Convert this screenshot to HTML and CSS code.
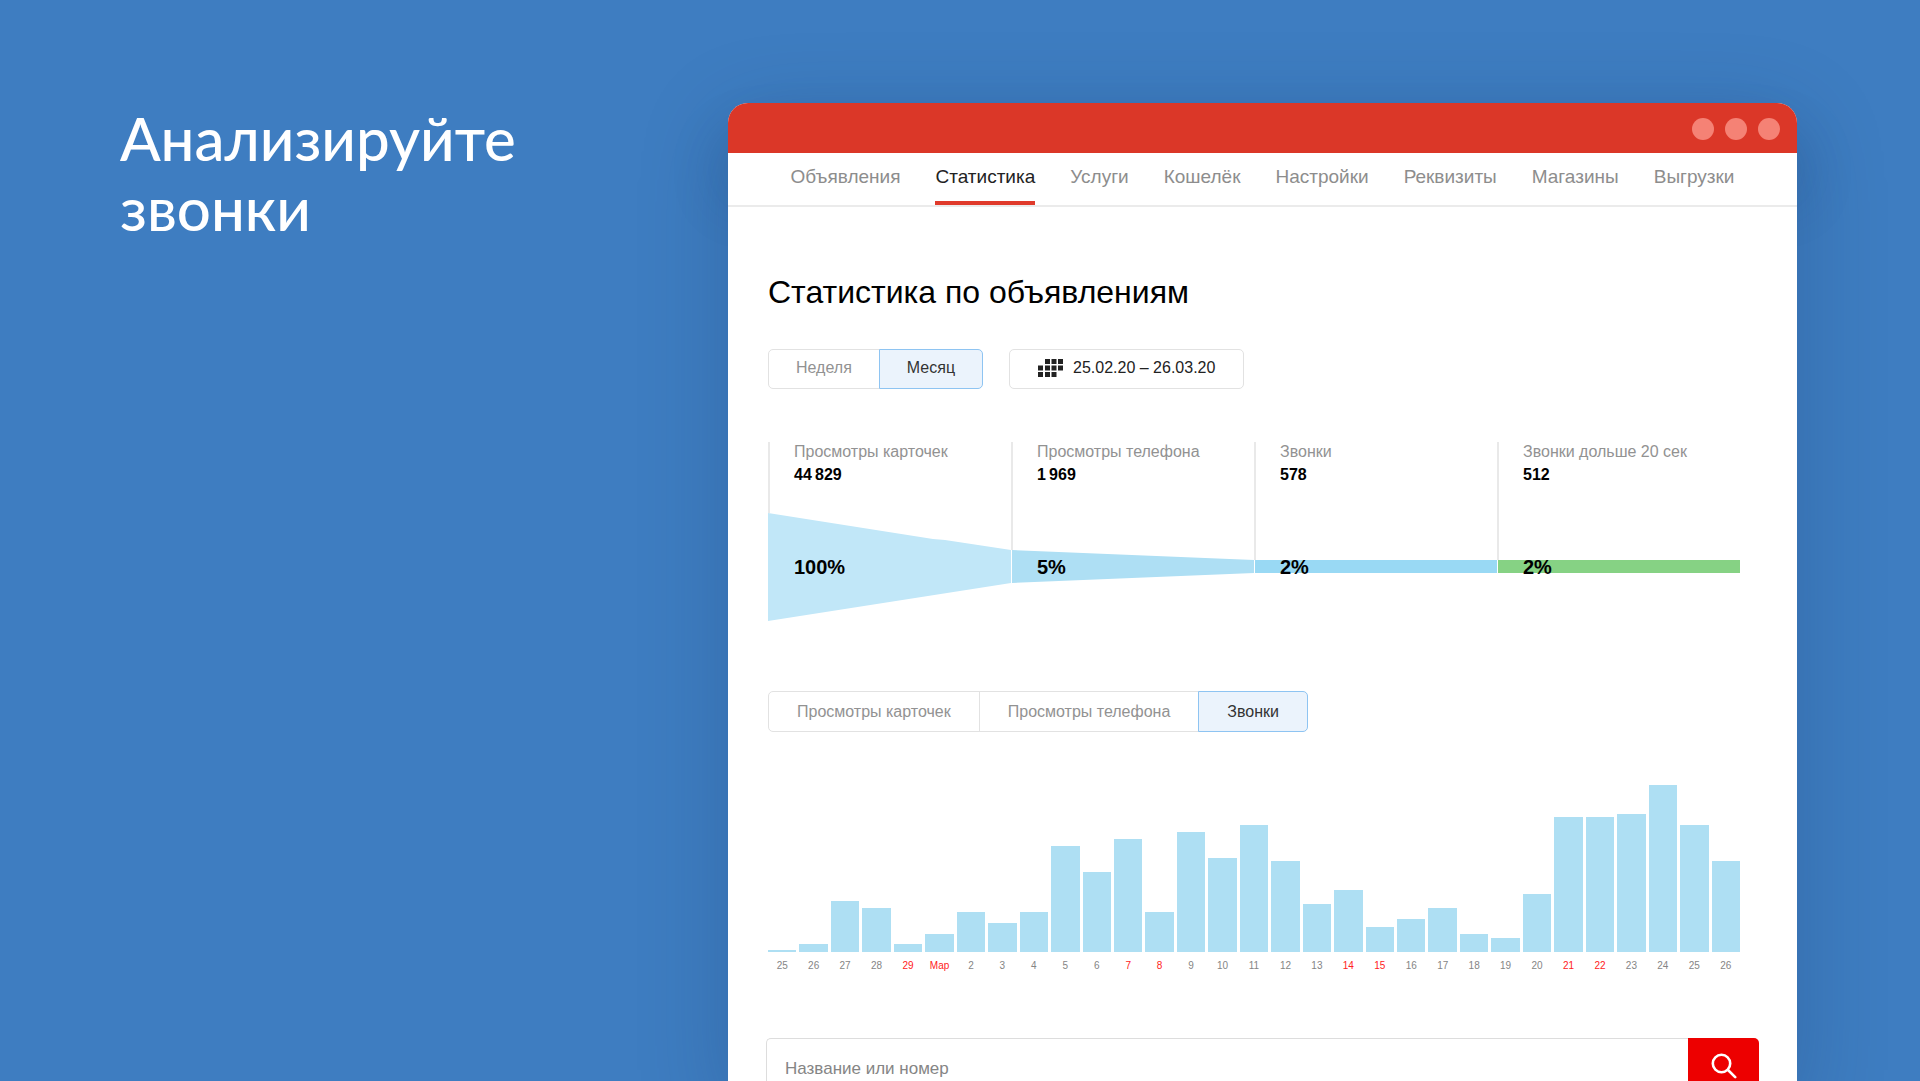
FILE: index.html
```html
<!DOCTYPE html>
<html lang="ru">
<head>
<meta charset="utf-8">
<title>Анализируйте звонки</title>
<link rel="stylesheet" href="styles.css">
</head>
<body>
<main class="slide">
  <h1 class="headline">Анализируйте звонки</h1>
  <section class="window">
    <header class="titlebar"><span class="dot"></span><span class="dot"></span><span class="dot"></span></header>
    <nav class="nav">
      <a class="nav-link" href="#">Объявления</a>
      <a class="nav-link active" href="#" aria-current="page">Статистика</a>
      <a class="nav-link" href="#">Услуги</a>
      <a class="nav-link" href="#">Кошелёк</a>
      <a class="nav-link" href="#">Настройки</a>
      <a class="nav-link" href="#">Реквизиты</a>
      <a class="nav-link" href="#">Магазины</a>
      <a class="nav-link" href="#">Выгрузки</a>
    </nav>
    <div class="content">
      <h2 class="title">Статистика по объявлениям</h2>
      <div class="filters">
        <div class="segmented">
          <button type="button" class="segment">Неделя</button>
          <button type="button" class="segment selected" aria-pressed="true">Месяц</button>
        </div>
        <button type="button" class="segment date">
          <svg class="date-icon" viewBox="0 0 25 18" aria-hidden="true"><path fill="#222" d="M7 0h5v5H7zM13.500 0h5v5h-5zM20 0h5v5h-5zM0 6.500h5v5H0zM7 6.500h5v5H7zM13.500 6.500h5v5h-5zM20 6.500h5v5h-5zM0 13h5v5H0zM7 13h5v5H7zM13.500 13h5v5h-5z"/></svg>
          25.02.20 – 26.03.20
        </button>
      </div>

      <div class="funnel">
        <div class="step">
          <div class="step-info"><span class="step-name">Просмотры карточек</span><b class="step-count">44&#8201;829</b></div>
          <svg class="step-shape" viewBox="0 0 243 108" preserveAspectRatio="none" aria-hidden="true"><polygon fill="#c1e7f8" points="0,0 165,26 177,27 243,37 243,70 0,108"/></svg>
          <span class="step-rate">100%</span>
        </div>
        <div class="step">
          <div class="step-info"><span class="step-name">Просмотры телефона</span><b class="step-count">1&#8201;969</b></div>
          <svg class="step-shape" viewBox="0 0 243 108" preserveAspectRatio="none" aria-hidden="true"><path fill="#e9e9e9" d="M0 0h2v37H0z"/><polygon fill="#aedff4" points="1,37 243,47 243,60 1,70"/></svg>
          <span class="step-rate">5%</span>
        </div>
        <div class="step">
          <div class="step-info"><span class="step-name">Звонки</span><b class="step-count">578</b></div>
          <svg class="step-shape" viewBox="0 0 243 108" preserveAspectRatio="none" aria-hidden="true"><path fill="#e9e9e9" d="M0 0h2v47H0z"/><path fill="#99d9f4" d="M1 47h242v13H1z"/></svg>
          <span class="step-rate">2%</span>
        </div>
        <div class="step">
          <div class="step-info"><span class="step-name">Звонки дольше 20 сек</span><b class="step-count">512</b></div>
          <svg class="step-shape" viewBox="0 0 243 108" preserveAspectRatio="none" aria-hidden="true"><path fill="#e9e9e9" d="M0 0h2v47H0z"/><path fill="#86d284" d="M1 47h242v13H1z"/></svg>
          <span class="step-rate">2%</span>
        </div>
      </div>

      <div class="segmented tabs">
        <button type="button" class="segment">Просмотры карточек</button>
        <button type="button" class="segment">Просмотры телефона</button>
        <button type="button" class="segment selected" aria-pressed="true">Звонки</button>
      </div>

      <div class="chart">
        <div class="day"><i class="bar" style="height:2px"></i>25</div>
        <div class="day"><i class="bar" style="height:8px"></i>26</div>
        <div class="day"><i class="bar" style="height:51px"></i>27</div>
        <div class="day"><i class="bar" style="height:44px"></i>28</div>
        <div class="day off"><i class="bar" style="height:8px"></i>29</div>
        <div class="day off"><i class="bar" style="height:18px"></i>Мар</div>
        <div class="day"><i class="bar" style="height:40px"></i>2</div>
        <div class="day"><i class="bar" style="height:29px"></i>3</div>
        <div class="day"><i class="bar" style="height:40px"></i>4</div>
        <div class="day"><i class="bar" style="height:106px"></i>5</div>
        <div class="day"><i class="bar" style="height:80px"></i>6</div>
        <div class="day off"><i class="bar" style="height:113px"></i>7</div>
        <div class="day off"><i class="bar" style="height:40px"></i>8</div>
        <div class="day"><i class="bar" style="height:120px"></i>9</div>
        <div class="day"><i class="bar" style="height:94px"></i>10</div>
        <div class="day"><i class="bar" style="height:127px"></i>11</div>
        <div class="day"><i class="bar" style="height:91px"></i>12</div>
        <div class="day"><i class="bar" style="height:48px"></i>13</div>
        <div class="day off"><i class="bar" style="height:62px"></i>14</div>
        <div class="day off"><i class="bar" style="height:25px"></i>15</div>
        <div class="day"><i class="bar" style="height:33px"></i>16</div>
        <div class="day"><i class="bar" style="height:44px"></i>17</div>
        <div class="day"><i class="bar" style="height:18px"></i>18</div>
        <div class="day"><i class="bar" style="height:14px"></i>19</div>
        <div class="day"><i class="bar" style="height:58px"></i>20</div>
        <div class="day off"><i class="bar" style="height:135px"></i>21</div>
        <div class="day off"><i class="bar" style="height:135px"></i>22</div>
        <div class="day"><i class="bar" style="height:138px"></i>23</div>
        <div class="day"><i class="bar" style="height:167px"></i>24</div>
        <div class="day"><i class="bar" style="height:127px"></i>25</div>
        <div class="day"><i class="bar" style="height:91px"></i>26</div>
      </div>
    </div>
    <form class="search">
      <input class="search-input" type="text" placeholder="Название или номер" aria-label="Название или номер">
      <button class="search-button" type="button" aria-label="Найти">
        <svg class="search-icon" viewBox="0 0 26 26" aria-hidden="true"><g fill="none" stroke="#fff" stroke-width="2.600" stroke-linecap="round"><circle cx="10.500" cy="10.500" r="8.700"/><path d="M17 17l7.200 7.200"/></g></svg>
      </button>
    </form>
  </section>
</main>
</body>
</html>
```
FILE: styles.css
```css
* { box-sizing: border-box; }

body {
  margin: 0;
  background: #3e7dc1;
  font-family: "Liberation Sans", Arial, sans-serif;
}

.slide {
  display: grid;
  grid-template-columns: minmax(0, 608fr) minmax(0, 1069fr);
  align-items: start;
  height: 100vh;
  padding: 103px 123px 0 120px;
  overflow: hidden;
}

.headline {
  max-width: 480px;
  margin: 0;
  color: #fff;
  font: 500 60px/70px Lato, Inter, sans-serif;
}

.window {
  background: #fff;
  border-radius: 20px 20px 0 0;
  box-shadow: 0 20px 90px rgba(20, 50, 90, .24);
}

.titlebar {
  display: flex;
  justify-content: flex-end;
  gap: 11px;
  height: 50px;
  padding: 15px 17px 13px;
  border-radius: 20px 20px 0 0;
  background: #db3728;
  box-shadow: 0 40px 60px rgba(20, 50, 90, .24);
}

.dot {
  width: 22px;
  height: 22px;
  border-radius: 50%;
  background: #f58275;
}

/* Opaque and positioned, so the title bar's shadow shows only outside the window */
.nav,
.content {
  position: relative;
  background: #fff;
}

.nav {
  display: flex;
  justify-content: center;
  gap: 35px;
  height: 54px;
  border-bottom: 2px solid #ebebeb;
}

.nav-link {
  height: 52px;
  padding-top: 12px;
  color: #8d8d8d;
  font-size: 19px;
  line-height: 24px;
  text-decoration: none;
}

.nav-link.active {
  border-bottom: 4px solid #e03a2b;
  color: #222;
}

.content { padding: 65px 57px 0 40px; }

.title {
  margin: 0 0 37px;
  font-size: 32px;
  font-weight: 400;
  line-height: 40px;
}

.filters {
  display: flex;
  gap: 26px;
}

.segmented { display: flex; }

.segment {
  height: 40px;
  padding: 0 27px 2px;
  border: 1px solid #e2e2e2;
  background: #fff;
  color: #929292;
  font: 16px/20px "Liberation Sans", Arial, sans-serif;
}

.segment + .segment { margin-left: -1px; }
.segment:first-child { border-radius: 5px 0 0 5px; }
.segment:last-child { border-radius: 0 5px 5px 0; }

.segment.selected {
  border-color: #8ec4f2;
  background: #ebf3fc;
  color: #333;
}

.segment.date {
  display: flex;
  align-items: center;
  gap: 10px;
  padding: 0 28px 2px;
  border-radius: 5px;
  color: #222;
}

.tabs .segment {
  height: 41px;
  padding: 0 28px;
}

.date-icon {
  width: 25px;
  height: 18px;
}

.funnel {
  display: grid;
  grid-template-columns: repeat(4, minmax(0, 1fr));
  margin: 53px 0 70px;
}

.step {
  display: grid;
  grid-template: 71px 108px / minmax(0, 1fr);
}

.step-info {
  display: flex;
  flex-direction: column;
  padding-left: 24px;
  border-left: 2px solid #e9e9e9;
  font-size: 16px;
}

.step-name {
  color: #929292;
  line-height: 19px;
}

.step-count { line-height: 27px; }

.step-shape {
  grid-area: 2 / 1;
  width: 100%;
  height: 108px;
}

.step-rate {
  grid-area: 2 / 1;
  align-self: center;
  padding-left: 26px;
  font-size: 20px;
  font-weight: 700;
  line-height: 24px;
}

.chart {
  display: grid;
  grid-template-columns: repeat(31, minmax(0, 1fr));
  align-items: end;
  gap: 3px;
  margin-top: 53px;
}

.day {
  color: #858585;
  font-size: 10px;
  line-height: 12px;
  text-align: center;
}

.day.off { color: #f22; }

.bar {
  display: block;
  margin-bottom: 8px;
  background: #aedff3;
}

.search {
  display: flex;
  height: 62px;
  margin: 66px 38px 0;
}

.search-input {
  flex: 1;
  min-width: 0;
  padding: 0 18px;
  border: 1px solid #ddd;
  border-right: 0;
  border-radius: 5px 0 0 5px;
  background: #fff;
  font: 17px/20px "Liberation Sans", Arial, sans-serif;
}

.search-input::placeholder { color: #858585; }

.search-button {
  width: 71px;
  padding: 0 0 6px;
  border: 0;
  border-radius: 0 5px 5px 0;
  background: #ed0000;
}

.search-icon {
  display: block;
  width: 26px;
  height: 26px;
  margin: 0 auto;
}
```
